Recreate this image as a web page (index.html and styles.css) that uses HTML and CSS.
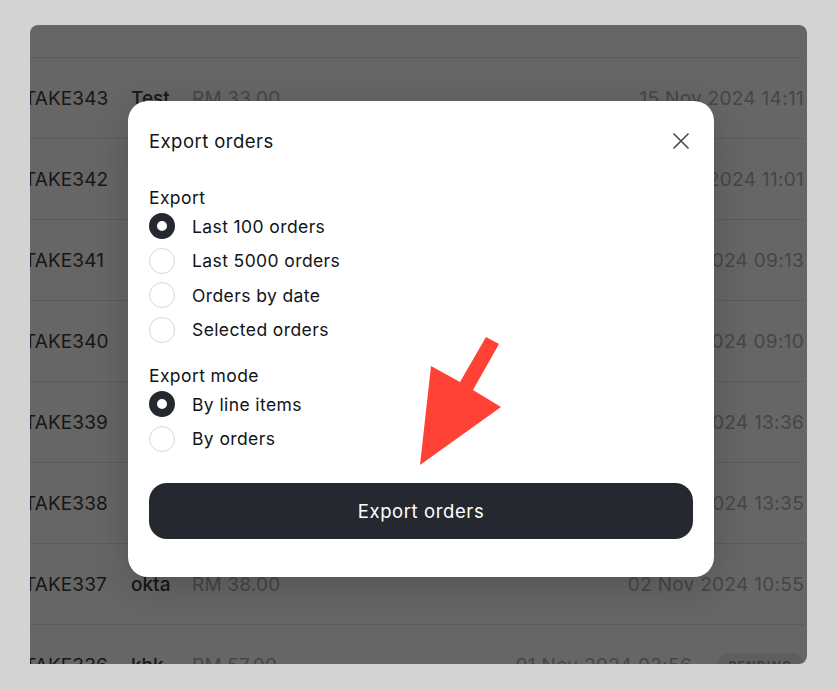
FILE: index.html
```html
<!DOCTYPE html>
<html lang="en">
<head>
<meta charset="utf-8">
<title>Export orders</title>
<link rel="stylesheet" href="styles.css">
</head>
<body>
<div class="frame">
  <div class="list">
    <div class="list-top"></div>
    <div class="row"><span class="id">TAKE343</span><span class="name">Test</span><span class="amount">RM 33.00</span><span class="date">15 Nov 2024 14:11</span></div>
    <div class="row"><span class="id">TAKE342</span><span class="name">Ali</span><span class="amount">RM 24.00</span><span class="date">14 Nov 2024 11:01</span></div>
    <div class="row"><span class="id">TAKE341</span><span class="name">Sam</span><span class="amount">RM 19.00</span><span class="date">13 Nov 2024 09:13</span></div>
    <div class="row"><span class="id">TAKE340</span><span class="name">Lim</span><span class="amount">RM 42.00</span><span class="date">12 Nov 2024 09:10</span></div>
    <div class="row"><span class="id">TAKE339</span><span class="name">Tan</span><span class="amount">RM 28.00</span><span class="date">08 Nov 2024 13:36</span></div>
    <div class="row"><span class="id">TAKE338</span><span class="name">Tan</span><span class="amount">RM 28.00</span><span class="date">08 Nov 2024 13:35</span></div>
    <div class="row"><span class="id">TAKE337</span><span class="name">okta</span><span class="amount">RM 38.00</span><span class="date">02 Nov 2024 10:55</span></div>
    <div class="row"><span class="id">TAKE336</span><span class="name">khk</span><span class="amount">RM 57.00</span><span class="date">01 Nov 2024 03:56</span><span class="badge">PENDING</span></div>
  </div>
  <div class="overlay">
    <div class="modal">
      <div class="modal-head">
        <span class="modal-title">Export orders</span>
        <svg class="close" width="20" height="20" viewBox="0 0 20 20" aria-label="Close"><path d="M3 3 L17 17 M17 3 L3 17" stroke="#4a4f57" stroke-width="1.7" stroke-linecap="round" fill="none"/></svg>
      </div>
      <div class="group">
        <div class="group-label">Export</div>
        <div class="option"><span class="radio checked"></span><span>Last 100 orders</span></div>
        <div class="option"><span class="radio"></span><span>Last 5000 orders</span></div>
        <div class="option"><span class="radio"></span><span>Orders by date</span></div>
        <div class="option"><span class="radio"></span><span>Selected orders</span></div>
      </div>
      <div class="group group-mode">
        <div class="group-label">Export mode</div>
        <div class="option"><span class="radio checked"></span><span>By line items</span></div>
        <div class="option"><span class="radio"></span><span>By orders</span></div>
      </div>
      <button class="export-btn">Export orders</button>
    </div>
  </div>
</div>
<svg class="arrow" width="837" height="689" viewBox="0 0 837 689"><polygon points="486,337 499,344 473,390 501,407 420,465 431,366 460,382" fill="#ff4136"/></svg>
</body>
</html>
```
FILE: styles.css
```css
* { box-sizing: border-box; }
html, body { margin: 0; padding: 0; }
body {
  width: 837px;
  height: 689px;
  background: #d3d3d3;
  font-family: Inter, "Liberation Sans", sans-serif;
  overflow: hidden;
  position: relative;
}
.frame {
  margin: 25px 30px 0 30px;
  height: 639px;
  border-radius: 8px 8px 8px 0;
  overflow: hidden;
  position: relative;
  background: #ffffff;
}
.list { margin-left: -6px; margin-right: 3px; }
.list-top { height: 32px; }
.row {
  height: 81px;
  border-top: 1px solid #e6e6e6;
  display: flex;
  align-items: center;
  font-size: 19px;
  white-space: nowrap;
}
.id { width: 107px; color: #3c3c3c; letter-spacing: 0.1px; }
.name { width: 61px; color: #3c3c3c; font-weight: 500; }
.amount { color: #b0b0b0; letter-spacing: 0.2px; }
.date { margin-left: auto; color: #b0b0b0; letter-spacing: 0.3px; }
.badge {
  margin-left: 25px;
  width: 87px;
  height: 24px;
  border-radius: 12px;
  background: #ebebeb;
  color: #969696;
  font-size: 12px;
  font-weight: 700;
  letter-spacing: 1.4px;
  display: flex;
  align-items: center;
  justify-content: center;
}
.overlay {
  position: absolute;
  inset: 0;
  background: rgba(0, 0, 0, 0.6);
  padding: 76px 0 0 98px;
}
.modal {
  width: 586px;
  background: #fff;
  border-radius: 20px;
  padding: 27px 21px 38px 21px;
  box-shadow: 0 10px 40px rgba(0, 0, 0, 0.18);
  color: #111418;
}
.modal-head {
  height: 26px;
  display: flex;
  align-items: center;
  justify-content: space-between;
}
.modal-title { font-size: 18.5px; line-height: 26px; letter-spacing: 0.45px; }
.close { margin-right: 2px; }
.group { margin-top: 33.25px; }
.group-mode { margin-top: 18.5px; }
.group-label { font-size: 17.5px; line-height: 21.5px; letter-spacing: 0.4px; }
.option {
  height: 34.5px;
  display: flex;
  align-items: center;
  gap: 17px;
  font-size: 17.5px;
  letter-spacing: 0.4px;
}
.radio {
  width: 26px;
  height: 26px;
  border-radius: 50%;
  border: 1px solid #d3d8df;
  background: #fff;
  flex: none;
}
.radio.checked {
  border: 8px solid #25282e;
}
.export-btn {
  display: block;
  width: 100%;
  height: 56px;
  margin-top: 27.25px;
  border: 0;
  border-radius: 18px;
  background: #25282f;
  color: #fff;
  font-family: inherit;
  font-size: 18.5px;
  letter-spacing: 0.6px;
}
.arrow { position: absolute; left: 0; top: 0; pointer-events: none; }
```
